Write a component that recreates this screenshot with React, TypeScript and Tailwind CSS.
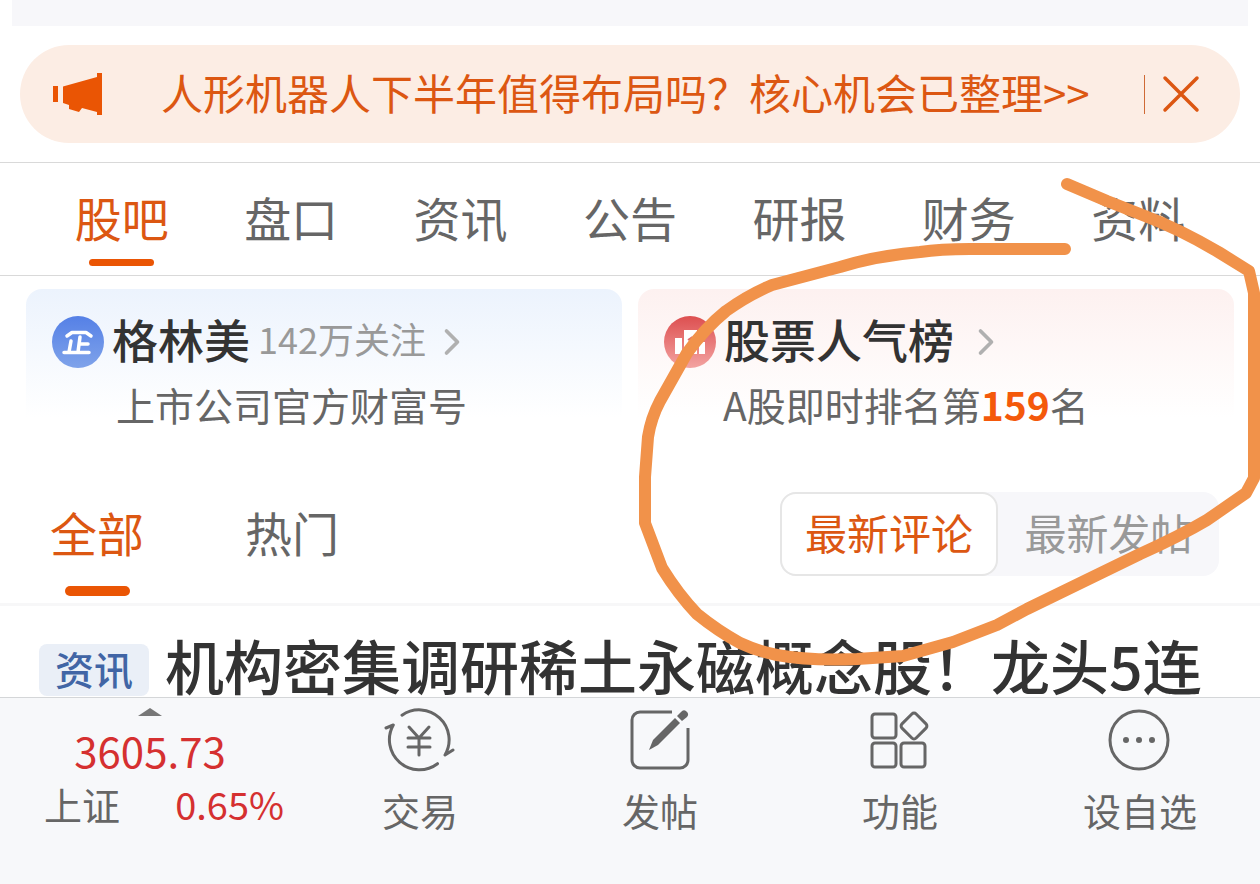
import { ChevronRight } from "lucide-react";

const tabs = ["股吧", "盘口", "资讯", "公告", "研报", "财务", "资料"];

const navItems = [
  { label: "交易", icon: TradeIcon },
  { label: "发帖", icon: PostIcon },
  { label: "功能", icon: FeatureIcon },
  { label: "设自选", icon: MoreIcon },
];

function HornIcon() {
  return (
    <svg viewBox="0 0 50 42" className="h-[42px] w-[50px]" fill="#ea5504">
      <path d="M0 13h5v16H0zM10 13.500 44 4V0h5v42h-5v-3L29 35l-3 4-10-3v-4l-6-2z" />
    </svg>
  );
}

function CompanyBadge() {
  return (
    <svg viewBox="0 0 52 52" className="size-[52px] shrink-0">
      <defs>
        <linearGradient id="company" x1="0" y1="0" x2="0" y2="1">
          <stop offset="0" stopColor="#5580e6" />
          <stop offset="1" stopColor="#7fa3ea" />
        </linearGradient>
      </defs>
      <circle cx="26" cy="26" r="26" fill="url(#company)" />
      <g fill="none" stroke="#fff" strokeWidth="3.500" strokeLinecap="round" strokeLinejoin="round">
        <path d="M15 20l5-3.500h14l5 3.500" />
        <path d="M28 21l-2 15M28 28h8M19 25l-2 11M12 36.500h25" />
      </g>
    </svg>
  );
}

function RankBadge() {
  return (
    <svg viewBox="0 0 52 52" className="size-[52px] shrink-0">
      <defs>
        <linearGradient id="rank" x1="0" y1="0" x2="0" y2="1">
          <stop offset="0" stopColor="#dd4f50" />
          <stop offset="1" stopColor="#f3a3a1" />
        </linearGradient>
      </defs>
      <circle cx="26" cy="26" r="26" fill="url(#rank)" />
      <path d="M11 22h7v16h-7zM20 14h13v24H20zM35 26h6v12h-6z" fill="#fff" />
      <path d="M24 24l3-2v8" fill="none" stroke="#e0696a" strokeWidth="2" />
    </svg>
  );
}

function TradeIcon() {
  return (
    <svg
      viewBox="0 0 72 64"
      className="h-16 w-[72px]"
      fill="none"
      stroke="#666"
      strokeWidth="3"
      strokeLinecap="round"
      strokeLinejoin="round"
    >
      <path d="M18 7.200A30 30 0 0 1 61 47l8-5" />
      <path d="M53.500 55.700A30 30 0 0 1 9.300 17l-7.300 3" />
      <path d="M25 19l10 11 10-11M24 30h22M24 39h22M35 30v17" />
    </svg>
  );
}

function PostIcon() {
  return (
    <svg viewBox="0 0 64 64" className="size-16">
      <path
        d="M44 4H12a8 8 0 0 0-8 8v40a8 8 0 0 0 8 8h40a8 8 0 0 0 8-8V20"
        fill="none"
        stroke="#666"
        strokeWidth="3"
      />
      <path d="M21 42l4-10 22-22 5 5-22 22z" fill="#666" />
      <path d="M49 8l4-4a3.500 3.500 0 0 1 6 5l-5 4z" fill="#666" />
    </svg>
  );
}

function FeatureIcon() {
  return (
    <svg viewBox="0 0 64 64" className="size-16" fill="none" stroke="#666" strokeWidth="3">
      <rect x="4" y="6" width="24" height="24" rx="3" />
      <rect x="4" y="35" width="24" height="24" rx="3" />
      <rect x="33" y="35" width="24" height="24" rx="3" />
      <rect x="36" y="8" width="20" height="20" rx="3" transform="rotate(45 46 18)" />
    </svg>
  );
}

function MoreIcon() {
  return (
    <svg viewBox="0 0 64 64" className="size-16">
      <circle cx="31" cy="32" r="29" fill="none" stroke="#666" strokeWidth="3" />
      <g fill="#666">
        <circle cx="18" cy="32" r="3" />
        <circle cx="31" cy="32" r="3" />
        <circle cx="44" cy="32" r="3" />
      </g>
    </svg>
  );
}

function Scribble() {
  return (
    <svg
      viewBox="0 0 1260 884"
      className="pointer-events-none absolute top-0 left-0 w-full"
      fill="none"
      stroke="#f1924a"
      strokeWidth="12"
      strokeLinecap="round"
      strokeLinejoin="round"
    >
      <path d="M1067 184L1107 201L1140 214Q1180 229 1220 253L1249 271L1254 293V478L1246 493L1207 520Q1180 536 1140 554L1027 609L997 625L953 642L903 656L857 659Q810 661 777 655Q757 651 740 643Q718 631 697 614Q678 594 662 568L645 523V477L648 437Q651 418 660 401L687 353Q705 328 726 311Q748 295 772 285L840 267Q875 256 920 252Q940 249 970 249H1065" />
    </svg>
  );
}

export default function App() {
  return (
    <div className="relative flex min-h-screen flex-col overflow-hidden bg-white font-['Noto_Sans_CJK_SC',sans-serif] text-[#666]">
      <div className="mx-3 h-[26px] bg-[#f7f7fa]" />

      <div className="mx-5 mt-[19px] flex h-[98px] items-center rounded-full bg-[#fcede4] pr-[39px] pl-[33px] text-[#dc5712]">
        <HornIcon />
        <a href="#news" className="ml-[58px] pb-1 text-[42px] leading-none whitespace-nowrap">
          人形机器人下半年值得布局吗？核心机会已整理&gt;&gt;
        </a>
        <button aria-label="关闭" className="ml-auto flex items-center gap-4">
          <span className="h-[39px] w-px bg-[#cf6a35]" />
          <svg viewBox="0 0 40 40" className="size-10" stroke="#dc5712" strokeWidth="3.500" strokeLinecap="round">
            <path d="M4 4l32 32M36 4L4 36" />
          </svg>
        </button>
      </div>

      <nav className="mt-[19px] grid h-[114px] grid-cols-7 border-y border-[#d9d9d9] px-[37px]">
        {tabs.map((tab, i) => (
          <a
            key={tab}
            href="#tab"
            className={`flex flex-col items-center pt-[30px] text-[47px] leading-[48px] ${i === 0 ? "text-[#dc5712]" : ""}`}
          >
            {tab}
            {i === 0 && <span className="mt-[18px] h-[7px] w-[65px] rounded-full bg-[#ea5504]" />}
          </a>
        ))}
      </nav>

      <section className="mx-[26px] mt-[13px] grid grid-cols-2 gap-4">
        <a href="#company" className="block h-[143px] rounded-2xl bg-linear-to-b from-[#ecf3fd] to-white to-90% pt-[27px] pl-[26px]">
          <div className="flex items-center">
            <CompanyBadge />
            <h2 className="ml-2 pb-2 text-[46px] leading-[44px] font-medium text-[#333]">格林美</h2>
            <span className="ml-2 pb-2 text-[36px] leading-[44px] text-[#999]">142万关注</span>
            <ChevronRight className="ml-1 size-11 text-[#b0b0b0]" strokeWidth={2} />
          </div>
          <p className="mt-2.5 pl-16 text-[39px] leading-[52px]">上市公司官方财富号</p>
        </a>
        <a href="#rank" className="block h-[143px] rounded-2xl bg-linear-to-b from-[#fdf1f0] to-white to-90% pt-[27px] pl-[26px]">
          <div className="flex items-center">
            <RankBadge />
            <h2 className="ml-2 pb-2 text-[46px] leading-[44px] font-medium text-[#333]">股票人气榜</h2>
            <ChevronRight className="ml-2.5 size-11 text-[#b0b0b0]" strokeWidth={2} />
          </div>
          <p className="mt-2.5 pl-[59px] text-[39px] leading-[52px]">
            A股即时排名第<strong className="font-bold text-[#f4590b]">159</strong>名
          </p>
        </a>
      </section>

      <section className="flex items-start border-b-3 border-[#f7f7f8] pr-[41px] pb-[7px] pl-[50px]">
        <button className="flex flex-col items-center pt-[76px] text-[47px] leading-[48px] text-[#dc5712]">
          全部
          <span className="mt-[30px] h-[10px] w-[65px] rounded-full bg-[#ea5504]" />
        </button>
        <button className="ml-[101px] pt-[76px] text-[47px] leading-[48px]">热门</button>
        <div className="mt-[60px] ml-auto flex h-[84px] rounded-2xl bg-[#f7f7fa] text-[42px]">
          <button className="w-[218px] rounded-2xl border-2 border-[#e6e6e6] bg-white pb-1.5 text-[#dc5712]">最新评论</button>
          <button className="w-[221px] pb-1.5 text-[#999]">最新发帖</button>
        </div>
      </section>

      <article id="news" className="flex items-start pl-[39px] whitespace-nowrap">
        <span className="mt-[38px] rounded-lg bg-[#eaeff7] px-4 pb-1 text-[39px] leading-[48px] font-medium text-[#4165a5]">资讯</span>
        <h1 className="ml-4 pt-[30px] pb-[3px] text-[59px] leading-[58px] font-medium text-[#333]">机构密集调研稀土永磁概念股！龙头5连</h1>
      </article>

      <footer className="grid flex-1 grid-cols-[5fr_4fr_4fr_4fr_4fr] border-t border-[#d4d6d8] bg-[#f7f8fa]">
        <button className="flex flex-col items-center pt-[10px]">
          <svg viewBox="0 0 24 8" className="h-2 w-6" fill="#777">
            <path d="M0 8L12 0l12 8z" />
          </svg>
          <span className="mt-2.5 text-[42px] leading-[48px] text-[#d53030]">3605.73</span>
          <span className="mt-1.5 flex w-full justify-between pr-4 pl-11 text-[38px] leading-[48px]">
            上证
            <span className="text-[#d53030]">0.65%</span>
          </span>
        </button>
        {navItems.map(({ label, icon: Icon }) => (
          <button key={label} className="flex flex-col items-center pt-[10px] text-[38px] leading-[48px]">
            <Icon />
            <span className="mt-3.5">{label}</span>
          </button>
        ))}
      </footer>

      <Scribble />
    </div>
  );
}
